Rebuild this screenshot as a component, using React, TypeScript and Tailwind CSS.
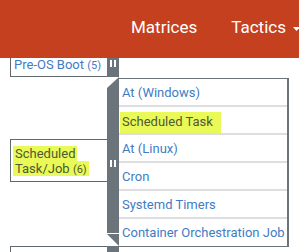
import React from 'react';

const subs = ['At (Windows)', 'Scheduled Task', 'At (Linux)', 'Cron', 'Systemd Timers', 'Container Orchestration Job'];

const Pause = () => (
  <span className="flex gap-[2px]">
    <span className="block w-[2px] h-[7px] bg-white" />
    <span className="block w-[2px] h-[7px] bg-white" />
  </span>
);

const App = () => {
  return <div className="w-[299px] h-[252px] overflow-hidden bg-white font-['Roboto',sans-serif]">
      {/* Header */}
      <header className="relative z-10 h-[58px] bg-[#c5401e] text-white flex items-center text-[17px] pb-[2px]">
        <span className="ml-[131px]">Matrices</span>
        <span className="ml-[34px] flex items-center">
          Tactics
          <svg className="ml-[7px] mt-[1px]" width="7" height="4" viewBox="0 0 7 4">
            <path d="M0 0h7L3.5 4z" fill="#fff" />
          </svg>
        </span>
      </header>

      <div className="flex pl-[10px]">
        {/* technique cells */}
        <div className="w-[97px] flex flex-col">
          <div className="h-[20px] border-l border-b border-[#60686e] pl-[3px] -mt-[1px] leading-[15px] text-[13px] text-[#3f7cc4]">
            Pre-OS Boot <span className="text-[11px]">(5)</span>
          </div>
          <div className="h-[62px]" />
          <div className="h-[43px] border-l border-t border-b border-[#60686e] pt-[6px] pl-[2px] text-[13px] leading-[15px] text-[#4f5a30]">
            <span className="bg-[#e9f958] px-[2px] [box-decoration-break:clone]">
              Scheduled<br />Task/Job <span className="text-[11px]">(6)</span>
            </span>
          </div>
          <div className="h-[64px]" />
          <div className="h-[10px] border-l border-t border-[#60686e]" />
        </div>

        {/* sidebars */}
        <div className="w-[12px] flex flex-col">
          <div className="h-[20px] bg-[#6b747b] flex justify-center pt-[3px] -mt-[1px]">
            <Pause />
          </div>
          <div className="h-[156px] bg-[#6b747b] [clip-path:polygon(0_11px,100%_0,100%_100%,0_100%)] flex items-center justify-center pt-[16px]">
            <Pause />
          </div>
          <div className="h-px" />
          <div className="h-[12px] bg-[#6b747b] [clip-path:polygon(0_0,100%_0,100%_100%)]" />
          <div className="h-[10px] bg-[#6b747b]" />
        </div>

        {/* sub-techniques */}
        <div className="w-[170px] mt-[20px] h-[169px] border-t border-b border-r-2 border-[#6b747b] flex flex-col">
          {subs.map((s, i) => (
            <div key={s} className={`h-[26px] flex items-center pl-[3px] pt-[2px] text-[13px] text-[#3f7cc4] ${i < subs.length - 1 ? 'border-b-2 border-[#dedede] h-[28px]' : ''}`}>
              {s === 'Scheduled Task' ? (
                <span className="self-end -ml-[2px] h-[21px] leading-[19px] pl-[2px] pr-[8px] bg-[#e9f958] text-[#4f5a30]">{s}</span>
              ) : s}
            </div>
          ))}
        </div>
      </div>
    </div>;
};
export default App;
